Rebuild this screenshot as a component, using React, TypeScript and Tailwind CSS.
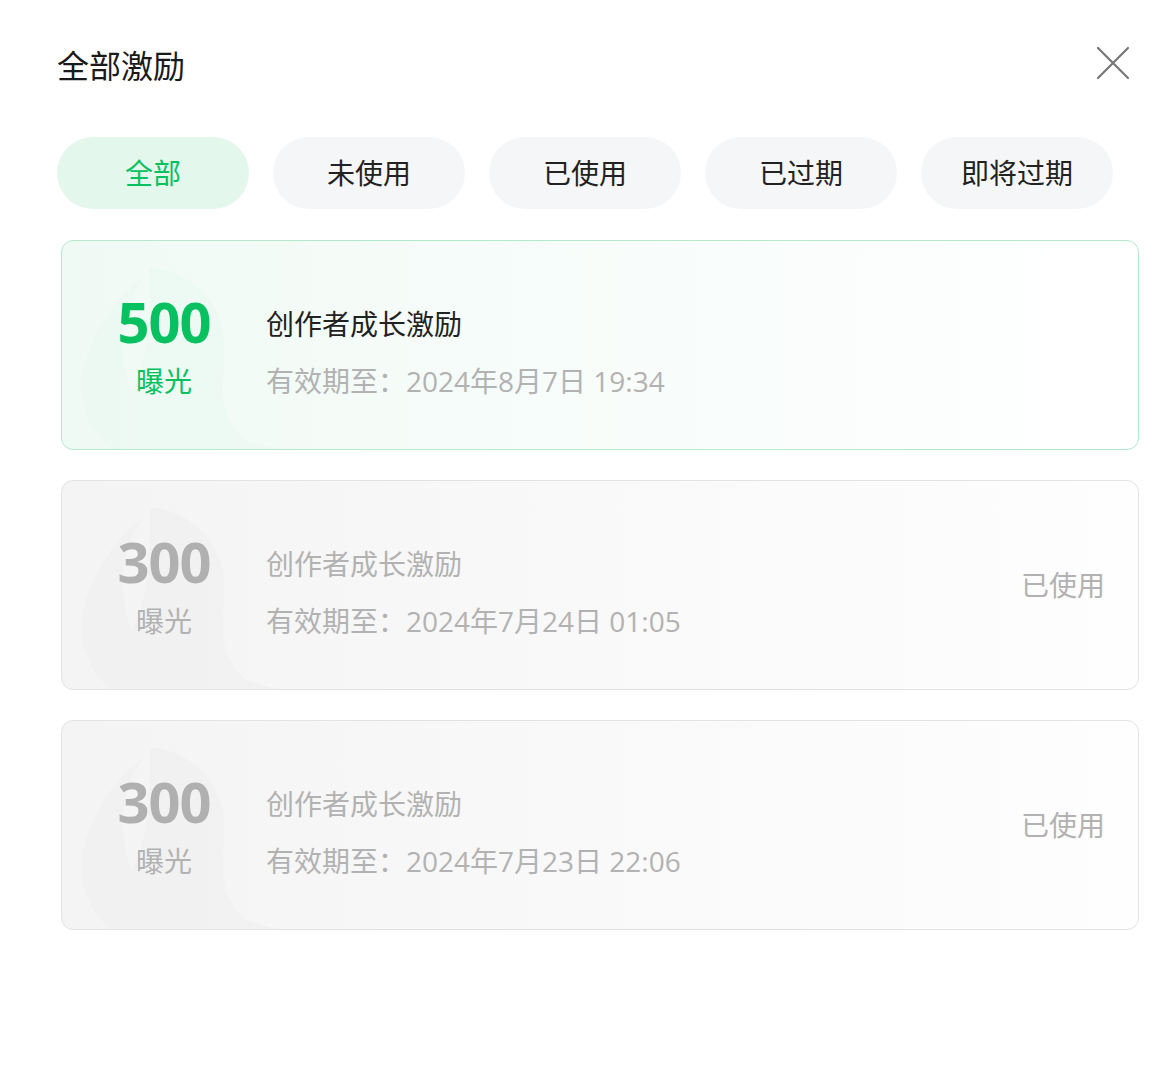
import React from "react";

type Reward = {
  id: number;
  amount: string;
  title: string;
  expire: string;
  used: boolean;
};

const tabs = ["全部", "未使用", "已使用", "已过期", "即将过期"];

const rewards: Reward[] = [
  { id: 1, amount: "500", title: "创作者成长激励", expire: "有效期至：2024年8月7日 19:34", used: false },
  { id: 2, amount: "300", title: "创作者成长激励", expire: "有效期至：2024年7月24日 01:05", used: true },
  { id: 3, amount: "300", title: "创作者成长激励", expire: "有效期至：2024年7月23日 22:06", used: true },
];

function Watermark({ used }: { used: boolean }) {
  const fill = used ? "#ececec" : "#e6f6ed";
  return (
    <svg className="absolute left-[10px] top-[20px] pointer-events-none" width="220" height="190" viewBox="0 0 220 190" fill="none">
      <path
        d="M78 6 C118 10 150 40 152 80 C154 120 140 150 175 180 L210 190 L40 190 C20 170 8 150 10 120 C14 80 40 40 70 18 C50 50 44 90 60 130 C70 110 80 80 78 6 Z"
        fill={fill}
        opacity="0.35"
      />
    </svg>
  );
}

function RewardCard({ r }: { r: Reward }) {
  return (
    <div
      className={
        "relative overflow-hidden w-[1078px] h-[210px] rounded-[12px] border flex items-start " +
        (r.used
          ? "border-[#e3e3e3] bg-gradient-to-r from-[#f4f4f4] to-[#fefefe]"
          : "border-[#b5e9cf] bg-gradient-to-r from-[#f0faf5] to-[#ffffff]")
      }
    >
      <Watermark used={r.used} />
      <div className="relative w-[204px] flex flex-col items-center pt-[49px]">
        <div
          className={
            "text-[56px] leading-[62px] font-bold tracking-[-1px] " + (r.used ? "text-[#b0b0b0]" : "text-[#07c160]")
          }
        >
          {r.amount}
        </div>
        <div className={"mt-[9px] text-[28px] leading-[40px] " + (r.used ? "text-[#b2b2b2]" : "text-[#07c160]")}>曝光</div>
      </div>
      <div className="relative flex flex-col pt-[63px]">
        <div className={"text-[28px] leading-[40px] " + (r.used ? "text-[#b2b2b2]" : "text-[#222222]")}>{r.title}</div>
        <div className="mt-[17px] text-[28px] leading-[40px] text-[#b2b2b2]">{r.expire}</div>
      </div>
      {r.used && (
        <div className="relative ml-auto self-center pr-[33px] text-[28px] leading-[40px] text-[#b2b2b2]">已使用</div>
      )}
    </div>
  );
}

export default function App() {
  return (
    <div
      className="w-[1171px] h-[1086px] bg-white pl-[57px] pt-[44px]"
      style={{ fontFamily: '"Open Sans", "Noto Sans CJK SC", sans-serif' }}
    >
      <div className="flex items-center justify-between h-[44px] pr-[40px]">
        <h1 className="text-[32px] leading-[44px] font-normal text-[#1a1a1a]">全部激励</h1>
        <button className="w-[36px] h-[36px] flex items-center justify-center mt-[-6px]">
          <svg width="34" height="34" viewBox="0 0 34 34" fill="none">
            <path d="M2 2 L32 32 M32 2 L2 32" stroke="#777777" strokeWidth="2.2" strokeLinecap="round" />
          </svg>
        </button>
      </div>

      <div className="flex gap-6 mt-[49px]">
        {tabs.map((t, i) => (
          <div
            key={t}
            className={
              "w-[192px] h-[72px] rounded-full flex items-center justify-center text-[28px] " +
              (i === 0 ? "bg-[#e3f7ec] text-[#07c160]" : "bg-[#f5f6f7] text-[#222222]")
            }
          >
            {t}
          </div>
        ))}
      </div>

      <div className="flex flex-col gap-[30px] mt-[31px] ml-[4px]">
        {rewards.map((r) => (
          <RewardCard key={r.id} r={r} />
        ))}
      </div>
    </div>
  );
}
